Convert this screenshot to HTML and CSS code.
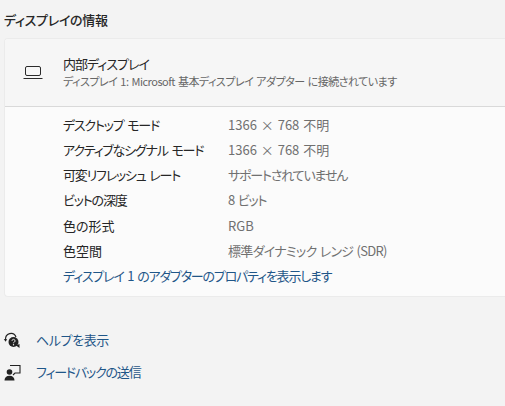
FILE: index.html
```html
<!DOCTYPE html>
<html lang="ja">
<head>
<meta charset="utf-8">
<title>ディスプレイの情報</title>
<link rel="stylesheet" href="styles.css">
</head>
<body>
<h2 class="title">ディスプレイの情報</h2>
<section class="card">
  <header class="card-head">
    <svg class="laptop" width="20" height="16" viewBox="0 0 20 16" fill="none" stroke="#2b2b2b" stroke-width="1">
      <rect x="2.500" y="2.500" width="15" height="9" rx="1.500"/>
      <path d="M0.500 14.500h19"/>
    </svg>
    <div class="head-text">
      <div class="head-title">内部ディスプレイ</div>
      <div class="head-sub">ディスプレイ 1: Microsoft 基本ディスプレイ アダプター に接続されています</div>
    </div>
  </header>
  <div class="card-body">
    <div class="row"><span class="k kana">デスクトップ モード</span><span class="v num">1366 × 768 不明</span></div>
    <div class="row"><span class="k kana">アクティブなシグナル モード</span><span class="v num">1366 × 768 不明</span></div>
    <div class="row"><span class="k kana">可変リフレッシュ レート</span><span class="v kana">サポートされていません</span></div>
    <div class="row"><span class="k kana">ビットの深度</span><span class="v kana">8 ビット</span></div>
    <div class="row"><span class="k">色の形式</span><span class="v">RGB</span></div>
    <div class="row"><span class="k">色空間</span><span class="v mixed">標準ダイナミック レンジ (SDR)</span></div>
    <a class="link row-link kana" href="#">ディスプレイ 1 のアダプターのプロパティを表示します</a>
  </div>
</section>
<nav class="help">
  <a class="help-item" href="#">
    <svg class="help-icon" width="20" height="20" viewBox="0 0 20 20">
      <path d="M2.500 10a5.500 6 0 0 1 10.500-3" fill="none" stroke="#222" stroke-width="1.200"/>
      <path d="M0.800 9l1.700 2.800 1.700-2.600z" fill="#222"/>
      <circle cx="10.500" cy="12" r="5" fill="#222"/>
      <path d="M13 15.500l3.500 2.500v-4z" fill="#222"/>
      <path d="M9 10.800a1.500 1.500 0 1 1 2.300 1.300c-.6.3-.8.6-.8 1.100" fill="none" stroke="#f3f3f3" stroke-width="1"/>
      <circle cx="10.500" cy="14.800" r=".7" fill="#f3f3f3"/>
    </svg>
    <span class="link help-text">ヘルプを表示</span>
  </a>
  <a class="help-item" href="#">
    <svg class="help-icon" width="20" height="20" viewBox="0 0 20 20">
      <path d="M7 3.500h10v7.500h-5l-2 2" fill="none" stroke="#222" stroke-width="1.100"/>
      <circle cx="6.500" cy="10" r="2.800" fill="#222"/>
      <path d="M1.500 18.500c0-3.200 2-4.800 5-4.800s5 1.600 5 4.800z" fill="#222"/>
    </svg>
    <span class="link kana">フィードバックの送信</span>
  </a>
</nav>
</body>
</html>
```
FILE: styles.css
```css
html, body {
  margin: 0;
  padding: 0;
}
body {
  width: 505px;
  height: 406px;
  overflow: hidden;
  background: #f3f3f3;
  color: #262626;
  font-family: "Noto Sans CJK JP", "Noto Sans", sans-serif;
  font-size: 13px;
  font-feature-settings: "palt";
  line-height: 25.3px;
}
.kana {
  letter-spacing: -1.2px;
  word-spacing: 2px;
}
.num {
  letter-spacing: 0;
  word-spacing: 1px;
}
.mixed {
  letter-spacing: -0.7px;
  word-spacing: 1px;
}
.title {
  margin: 0;
  padding: 8px 0 0 4px;
  height: 30px;
  font-size: 13px;
  font-weight: 500;
  line-height: 24px;
  letter-spacing: -0.3px;
}
.card {
  margin-left: 4px;
  height: 259px;
  background: #fbfbfb;
  border: 1px solid #ebebeb;
  border-right: 0;
  border-radius: 4px 0 0 4px;
  box-sizing: border-box;
  overflow: hidden;
}
.card-head {
  display: flex;
  align-items: center;
  height: 68px;
  padding-bottom: 2px;
  background: #f6f6f6;
  border-bottom: 1px solid #d9d9d9;
  box-sizing: border-box;
}
.laptop {
  margin-left: 18px;
  flex: none;
}
.head-text {
  margin-left: 20px;
}
.head-title {
  font-size: 13px;
  line-height: 18px;
  letter-spacing: -1px;
}
.head-sub {
  font-size: 11px;
  line-height: 16px;
  color: #666;
  white-space: nowrap;
  letter-spacing: -0.5px;
  word-spacing: 1px;
}
.card-body {
  padding: 4.5px 0 0 58px;
}
.row {
  display: flex;
}
.k {
  width: 165px;
  flex: none;
  white-space: nowrap;
}
.v {
  color: #707070;
  white-space: nowrap;
}
.link {
  color: #1f5688;
  text-decoration: none;
}
.row-link {
  display: block;
}
.help {
  display: flex;
  flex-direction: column;
  gap: 7px;
  margin-top: 30px;
}
.help-item {
  display: flex;
  align-items: center;
  height: 25px;
  padding-left: 3px;
  text-decoration: none;
}
.help-icon {
  flex: none;
  margin-right: 13px;
}
.help-text {
  letter-spacing: -0.4px;
}
```
